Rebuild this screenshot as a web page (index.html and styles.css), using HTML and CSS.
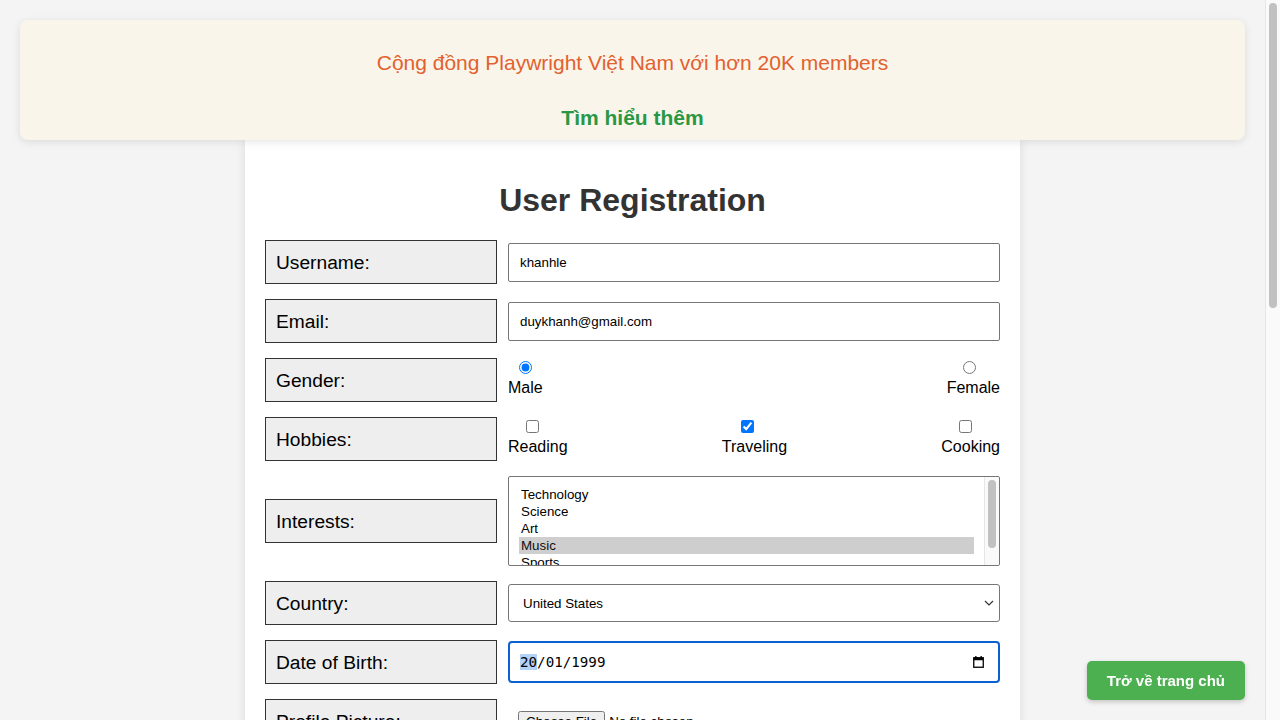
FILE: index.html
```html
<!DOCTYPE html>
<html lang="vi">
<head>
<meta charset="utf-8">
<title>User Registration</title>
<link rel="stylesheet" href="styles.css">
</head>
<body>
<div class="banner">
  <p class="banner-text">Cộng đồng Playwright Việt Nam với hơn 20K members</p>
  <a class="banner-link" href="#">Tìm hiểu thêm</a>
</div>

<div class="container">
  <h1>User Registration</h1>
  <form class="form">
    <div class="row">
      <label class="field-label" for="username">Username:</label>
      <input class="control text-input" id="username" type="text" value="khanhle">
    </div>
    <div class="row">
      <label class="field-label" for="email">Email:</label>
      <input class="control text-input" id="email" type="email" value="duykhanh@gmail.com">
    </div>
    <div class="row">
      <label class="field-label">Gender:</label>
      <div class="control options">
        <label class="option"><input class="radio" type="radio" name="gender" checked><span>Male</span></label>
        <label class="option"><input class="radio radio-shift" type="radio" name="gender"><span>Female</span></label>
      </div>
    </div>
    <div class="row">
      <label class="field-label">Hobbies:</label>
      <div class="control options">
        <label class="option"><input class="check" type="checkbox"><span>Reading</span></label>
        <label class="option"><input class="check check-mid" type="checkbox" checked><span>Traveling</span></label>
        <label class="option"><input class="check" type="checkbox"><span>Cooking</span></label>
      </div>
    </div>
    <div class="row">
      <label class="field-label" for="interests">Interests:</label>
      <div class="control listbox-wrap">
        <select class="listbox" id="interests" multiple size="5">
          <option>Technology</option>
          <option>Science</option>
          <option>Art</option>
          <option selected>Music</option>
          <option>Sports</option>
        </select>
        <div class="mini-track" aria-hidden="true"><div class="mini-thumb"></div></div>
      </div>
    </div>
    <div class="row">
      <label class="field-label" for="country">Country:</label>
      <div class="control select-wrap">
        <select class="select" id="country">
          <option>United States</option>
          <option>Canada</option>
          <option>United Kingdom</option>
          <option>Australia</option>
        </select>
        <svg class="chevron" width="10" height="6" viewBox="0 0 10 6" aria-hidden="true"><path d="M1 1l4 4 4-4" fill="none" stroke="#333" stroke-width="1.2"/></svg>
      </div>
    </div>
    <div class="row">
      <label class="field-label">Date of Birth:</label>
      <div class="control date-field" tabindex="0">
        <span class="date-text"><span class="date-sel">20</span>/01/1999</span>
        <svg class="cal" width="11" height="12" viewBox="0 0 11 12" aria-hidden="true">
          <rect x="0.75" y="1.75" width="9.5" height="9.5" fill="none" stroke="#000" stroke-width="1.3"/>
          <rect x="0.75" y="1.75" width="9.5" height="2.5" fill="#000"/>
          <rect x="2.2" y="0" width="1.3" height="2" fill="#000"/>
          <rect x="7.5" y="0" width="1.3" height="2" fill="#000"/>
        </svg>
      </div>
    </div>
    <div class="row">
      <label class="field-label" for="profile">Profile Picture:</label>
      <input class="control file-input" id="profile" type="file">
    </div>
    <div class="row">
      <label class="field-label" for="bio">Biography:</label>
      <textarea class="control textarea" id="bio" rows="4"></textarea>
    </div>
    <div class="row">
      <label class="field-label" for="rating">Rate Us:</label>
      <input class="control range" id="rating" type="range" min="1" max="10" value="5">
    </div>
    <div class="row">
      <label class="field-label" for="color">Favorite Color:</label>
      <input class="control color" id="color" type="color" value="#000000">
    </div>
    <div class="row">
      <label class="field-label" for="news">Newsletter:</label>
      <div class="control inline-check"><input id="news" type="checkbox"> Subscribe</div>
    </div>
    <div class="row">
      <label class="field-label">Enable Feature:</label>
      <div class="control inline-check"><span class="toggle"><span class="knob"></span></span></div>
    </div>
    <div class="row">
      <label class="field-label">Star Rating:</label>
      <div class="control stars">★★★★★</div>
    </div>
    <div class="row">
      <label class="field-label" for="custom">Custom Date:</label>
      <input class="control text-input" id="custom" type="text" placeholder="dd/mm/yyyy">
    </div>
    <div class="submit-row">
      <button class="submit" type="button">Register</button>
    </div>
  </form>
  <table class="users">
    <thead>
      <tr><th>Username</th><th>Email</th><th>Information</th><th>Actions</th></tr>
    </thead>
    <tbody></tbody>
  </table>
</div>

<a class="home-btn" href="#">Trở về trang chủ</a>
<div class="page-scrollbar" aria-hidden="true"><div class="page-thumb"></div></div>
</body>
</html>
```

FILE: styles.css
```css
html {
  background: #f4f4f4;
}

body {
  margin: 0;
  padding: 20px 35px 0 20px;
  font-family: "Liberation Sans", Arial, Helvetica, sans-serif;
  background: #f4f4f4;
  color: #000;
}

/* emulated page scrollbar */
.page-scrollbar {
  position: fixed;
  top: 0;
  right: 0;
  bottom: 0;
  width: 14px;
  background: #fafafa;
  border-left: 1px solid #e6e6e6;
}

.page-thumb {
  width: 8px;
  height: 305px;
  margin: 3px 0 0 3px;
  border-radius: 4px;
  background: #c1c1c1;
}

/* banner */
.banner {
  position: relative;
  z-index: 1;
  background: #f9f5ea;
  border-radius: 8px;
  box-shadow: 0 2px 8px rgba(0, 0, 0, 0.1);
  padding: 31px 20px 10px;
  text-align: center;
}

.banner-text {
  margin: 0;
  font-size: 21px;
  line-height: 24px;
  color: #e2612f;
}

.banner-link {
  display: block;
  margin-top: 31px;
  font-size: 21px;
  line-height: 24px;
  font-weight: bold;
  color: #2a9744;
  text-decoration: none;
}

/* container */
.container {
  max-width: 735px;
  min-height: 1487px;
  margin: 0 auto;
  padding: 20px;
  background: #fff;
  box-shadow: 0 0 10px rgba(0, 0, 0, 0.1);
}

h1 {
  margin: 22px 0 21px;
  font-size: 32px;
  line-height: 37px;
  text-align: center;
  color: #333;
}

.row {
  display: flex;
  align-items: center;
  gap: 11px;
  margin-bottom: 15px;
}

.field-label {
  flex: 0 0 232px;
  box-sizing: border-box;
  padding: 11px 10px 10px;
  border: 1px solid #333;
  background: #eee;
  font-size: 19.2px;
  line-height: 21px;
  color: #000;
}

.control {
  flex: 1;
  min-width: 0;
  box-sizing: border-box;
  font-family: "Liberation Sans", Arial, sans-serif;
  font-size: 13.33px;
}

.text-input {
  height: 39px;
  padding: 10px 11px;
  border: 1px solid #767676;
  border-radius: 2px;
  color: #000;
  background: #fff;
}

/* radio / checkbox groups */
.options {
  align-self: stretch;
  display: flex;
  justify-content: space-between;
  font-size: 16px;
}

.option {
  display: flex;
  flex-direction: column;
  align-items: center;
  line-height: 18px;
}

.radio {
  width: 13px;
  height: 13px;
  margin: 2.5px 0 5px;
}

.radio-shift {
  margin-right: 7px;
}

.check {
  width: 13px;
  height: 13px;
  margin: 2.5px 11px 5px 0;
}

.check-mid {
  margin-right: 13px;
}

/* listbox */
.listbox-wrap {
  position: relative;
  display: flex;
  height: 90px;
}

.listbox {
  flex: 1;
  min-width: 0;
  height: 90px;
  box-sizing: border-box;
  padding: 9px 25px 9px 10px;
  border: 1px solid #767676;
  border-radius: 2px;
  background: #fff;
  color: #000;
  font-family: "Liberation Sans", Arial, sans-serif;
  font-size: 13.33px;
  overflow: hidden;
}

.listbox option {
  padding: 1px 2px 0;
}

.mini-track {
  position: absolute;
  top: 1px;
  right: 1px;
  bottom: 1px;
  width: 14px;
  background: #fafafa;
  border-left: 1px solid #e6e6e6;
  border-radius: 0 2px 2px 0;
}

.mini-thumb {
  width: 8px;
  height: 68px;
  margin: 3px 0 0 3px;
  border-radius: 4px;
  background: #c1c1c1;
}

/* country select */
.select-wrap {
  height: 38px;
  display: flex;
  align-items: center;
  border: 1px solid #767676;
  border-radius: 3px;
  background: #fff;
}

.select {
  flex: 1;
  align-self: stretch;
  appearance: none;
  -webkit-appearance: none;
  border: 0;
  outline: none;
  background: transparent;
  padding: 0 0 0 14px;
  font-family: "Liberation Sans", Arial, sans-serif;
  font-size: 13.33px;
  color: #000;
}

.chevron {
  margin-right: 5px;
  flex: none;
}

/* date field (focused look) */
.date-field {
  height: 42px;
  display: flex;
  align-items: center;
  justify-content: space-between;
  padding: 0 14px 0 10px;
  border: 2px solid #0b61d0;
  border-radius: 4px;
  background: #fff;
  outline: none;
}

.date-text {
  font-family: "DejaVu Sans Mono", "Liberation Mono", monospace;
  font-size: 14.2px;
  color: #000;
}

.date-sel {
  background: #b2d2fa;
}

.cal {
  flex: none;
}

.file-input {
  padding: 10px;
  font-size: 13.33px;
}

.textarea {
  height: 80px;
  padding: 10px;
  border: 1px solid #767676;
  border-radius: 2px;
  resize: vertical;
}

.range,
.color {
  height: 38px;
}

.inline-check {
  font-size: 16px;
  display: flex;
  align-items: center;
  gap: 4px;
}

.toggle {
  display: inline-flex;
  width: 40px;
  height: 20px;
  border-radius: 10px;
  background: #ccc;
  padding: 2px;
  box-sizing: border-box;
}

.knob {
  width: 16px;
  height: 16px;
  border-radius: 50%;
  background: #fff;
}

.stars {
  font-size: 24px;
  color: #ccc;
}

.submit-row {
  display: flex;
  justify-content: center;
  margin: 20px 0;
}

.submit {
  padding: 10px 20px;
  border: 0;
  border-radius: 4px;
  background: #4caf50;
  color: #fff;
  font-size: 16px;
  font-family: "Liberation Sans", Arial, sans-serif;
}

.users {
  width: 100%;
  border-collapse: collapse;
  margin-top: 20px;
  font-size: 14px;
}

.users th {
  border: 1px solid #ddd;
  padding: 8px;
  background: #f2f2f2;
  text-align: left;
}

/* fixed home button */
.home-btn {
  position: fixed;
  right: 35px;
  bottom: 20px;
  padding: 10px 20px;
  border-radius: 5px;
  background: #4caf50;
  color: #fff;
  font-size: 15px;
  line-height: 19px;
  font-weight: bold;
  text-decoration: none;
  box-shadow: 0 2px 5px rgba(0, 0, 0, 0.2);
}
```
